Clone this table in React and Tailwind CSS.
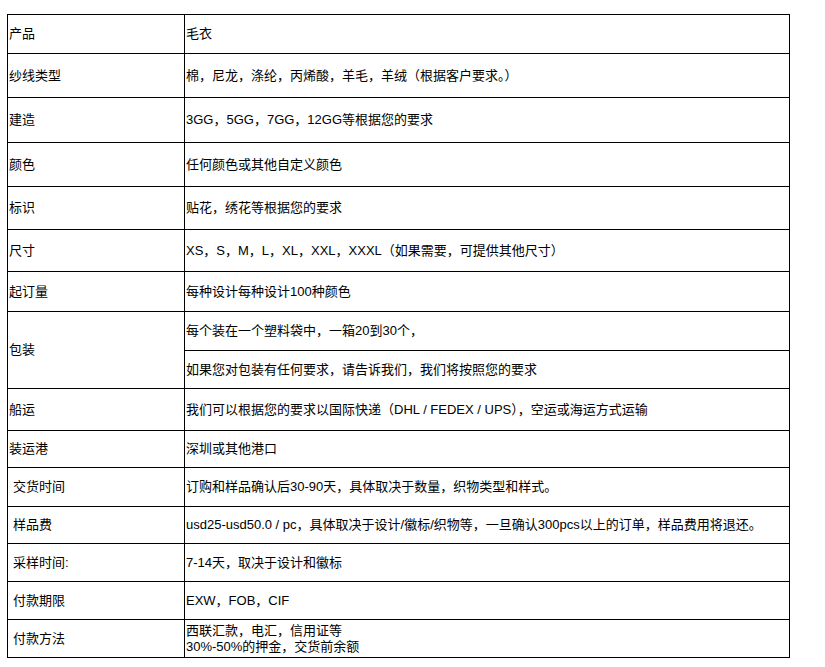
import React from "react";

const rows = [
  { l: "产品", r: ["毛衣"], h: 39 },
  { l: "纱线类型", r: ["棉，尼龙，涤纶，丙烯酸，羊毛，羊绒（根据客户要求。）"], h: 44 },
  { l: "建造", r: ["3GG，5GG，7GG，12GG等根据您的要求"], h: 45 },
  { l: "颜色", r: ["任何颜色或其他自定义颜色"], h: 44 },
  { l: "标识", r: ["贴花，绣花等根据您的要求"], h: 43 },
  { l: "尺寸", r: ["XS，S，M，L，XL，XXL，XXXL（如果需要，可提供其他尺寸）"], h: 42 },
  { l: "起订量", r: ["每种设计每种设计100种颜色"], h: 40 },
  { l: "包装", sub: ["每个装在一个塑料袋中，一箱20到30个，", "如果您对包装有任何要求，请告诉我们，我们将按照您的要求"], subh: [39, 38] },
  { l: "船运", r: ["我们可以根据您的要求以国际快递（DHL / FEDEX / UPS），空运或海运方式运输"], h: 42 },
  { l: "装运港", r: ["深圳或其他港口"], h: 37 },
  { l: "交货时间", r: ["订购和样品确认后30-90天，具体取决于数量，织物类型和样式。"], h: 39, ind: true },
  { l: "样品费", r: ["usd25-usd50.0 / pc，具体取决于设计/徽标/织物等，一旦确认300pcs以上的订单，样品费用将退还。"], h: 37, ind: true },
  { l: "采样时间:", r: ["7-14天，取决于设计和徽标"], h: 38, ind: true },
  { l: "付款期限", r: ["EXW，FOB，CIF"], h: 38, ind: true },
  { l: "付款方法", r: ["西联汇款，电汇，信用证等", "30%-50%的押金，交货前余额"], h: 38, ind: true },
];

export default function App() {
  return (
    <div className="w-[825px] h-[667px] bg-white pt-[14px] pl-[7px] text-black text-[13px] leading-[16px]" style={{ fontFamily: '"Liberation Sans", Arial, "Noto Sans CJK SC", sans-serif' }}>
      <table className="border-collapse w-[782px] table-fixed">
        <colgroup>
          <col className="w-[177px]" />
          <col className="w-[605px]" />
        </colgroup>
        <tbody>
          {rows.map((row, i) => {
            if (row.sub) {
              return (
                <React.Fragment key={i}>
                  <tr style={{ height: row.subh[0] }}>
                    <td rowSpan={2} className="border border-black px-[1px] align-middle">{row.l}</td>
                    <td className="border border-black px-[1px] align-middle">{row.sub[0]}</td>
                  </tr>
                  <tr style={{ height: row.subh[1] }}>
                    <td className="border border-black px-[1px] align-middle">{row.sub[1]}</td>
                  </tr>
                </React.Fragment>
              );
            }
            return (
              <tr key={i} style={{ height: row.h }}>
                <td className={"border border-black align-middle pr-[1px] " + (row.ind ? "pl-[5px]" : "pl-[1px]")}>{row.l}</td>
                <td className="border border-black px-[1px] align-middle leading-[16px]">
                  {row.r.map((t, j) => (
                    <div key={j}>{t}</div>
                  ))}
                </td>
              </tr>
            );
          })}
        </tbody>
      </table>
    </div>
  );
}
